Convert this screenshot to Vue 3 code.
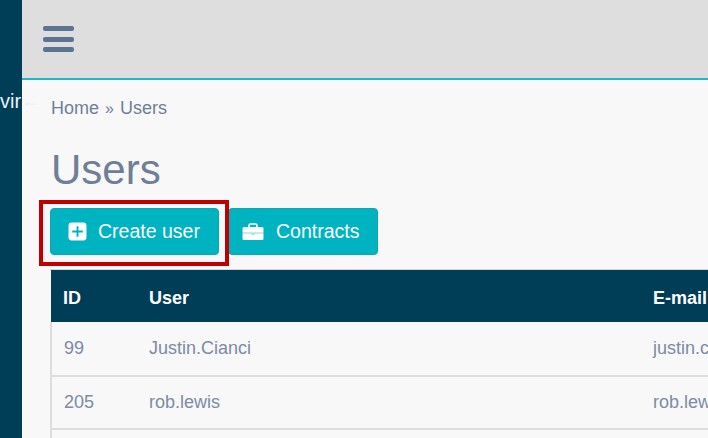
<template>
  <div class="page">
    <aside class="sidebar">
      <span class="side-text">vir</span>
    </aside>
    <span class="side-arrow">←</span>

    <div class="main">
      <header class="topbar">
        <button class="burger" aria-label="Menu">
          <span></span><span></span><span></span>
        </button>
      </header>

      <div class="content">
        <div class="breadcrumb">Home <span class="sep">»</span> Users</div>
        <h1>Users</h1>

        <div class="actions">
          <button class="btn btn-create">
            <svg width="19" height="19" viewBox="0 0 18 18">
              <rect x="0.5" y="0.5" width="17" height="17" rx="3" fill="#fff" />
              <path d="M9 4v10M4 9h10" stroke="#00b3c1" stroke-width="1.800" fill="none" />
            </svg>
            Create user
          </button>
          <button class="btn btn-contracts">
            <svg width="22" height="18" viewBox="0 0 22 18">
              <path d="M7 4V2.5A1.5 1.5 0 0 1 8.500 1h5A1.500 1.500 0 0 1 15 2.500V4" stroke="#fff" stroke-width="1.600" fill="none" />
              <path d="M0.500 5.500A1.500 1.500 0 0 1 2 4h18a1.500 1.500 0 0 1 1.500 1.500V9h-21z" fill="#fff" />
              <path d="M0.500 11h21v4.500A1.500 1.500 0 0 1 20 17H2a1.500 1.500 0 0 1-1.500-1.500z" fill="#fff" />
              <rect x="0.500" y="9" width="21" height="2" fill="#bfecef" />
              <path d="M9 10.500c.6 1.200 3.400 1.200 4 0" stroke="#7fd6dd" stroke-width="1" fill="none" />
            </svg>
            Contracts
          </button>
          <div class="highlight"></div>
        </div>

        <table class="users">
          <thead>
            <tr>
              <th class="col-id">ID</th>
              <th class="col-user">User</th>
              <th>E-mail</th>
            </tr>
          </thead>
          <tbody>
            <tr v-for="row in rows" :key="row.id">
              <td>{{ row.id }}</td>
              <td>{{ row.user }}</td>
              <td>{{ row.email }}</td>
            </tr>
          </tbody>
        </table>
      </div>
    </div>
  </div>
</template>

<script setup>
const rows = [
  { id: 99, user: 'Justin.Cianci', email: 'justin.cianci@example.com' },
  { id: 205, user: 'rob.lewis', email: 'rob.lewis@example.com' },
  { id: '', user: '', email: '' },
]
</script>

<style>
html, body {
  margin: 0;
  overflow: hidden;
}
</style>

<style scoped>
.page {
  position: relative;
  display: flex;
  width: 708px;
  height: 438px;
  overflow: hidden;
  background: #f8f8f8;
  font-family: "Liberation Sans", Arial, sans-serif;
}

.sidebar {
  flex: 0 0 22px;
  position: relative;
  background: #003d57;
}

.side-text {
  position: absolute;
  left: 0;
  top: 90px;
  color: #e6f3f7;
  font-size: 20px;
  line-height: 22px;
  z-index: 1;
}

.side-arrow {
  position: absolute;
  left: 21px;
  top: 90px;
  color: #e9eff1;
  font-size: 18px;
  line-height: 22px;
}

.main {
  flex: 1;
  min-width: 0;
}

.topbar {
  height: 78px;
  background: #dedede;
  border-bottom: 2px solid #20b8c4;
  display: flex;
  align-items: center;
  padding-left: 21px;
}

.burger {
  display: flex;
  flex-direction: column;
  gap: 5.500px;
  width: 31px;
  padding: 0;
  border: 0;
  background: none;
}

.burger span {
  height: 5px;
  border-radius: 2px;
  background: #5c7391;
}

.content {
  padding: 17px 0 0 28px;
}

.breadcrumb {
  padding-left: 1px;
  color: #6f7f97;
  font-size: 18px;
  line-height: 22px;
}

.sep {
  margin: 0 1px;
  font-size: 16px;
}

h1 {
  margin: 26px 0 0;
  padding-left: 1px;
  color: #6f7f97;
  font-size: 42px;
  font-weight: 400;
  line-height: 48px;
}

.actions {
  position: relative;
  display: flex;
  gap: 9px;
  margin-top: 14px;
}

.btn {
  display: flex;
  align-items: center;
  height: 47px;
  padding: 0 0 0 17px;
  border: 1px solid #0ca7b4;
  border-radius: 4px;
  background: #00b3c1;
  color: #fff;
  font-family: inherit;
  font-size: 19.500px;
}

.btn-create {
  width: 169px;
  gap: 11px;
}

.btn-contracts {
  width: 150px;
  padding-left: 13px;
  gap: 12px;
}

.highlight {
  position: absolute;
  left: -11px;
  top: -8px;
  width: 190px;
  height: 66px;
  box-sizing: border-box;
  border: 4px solid #c00000;
  pointer-events: none;
}

.users {
  width: 800px;
  margin: 15px 0 0;
  border-collapse: collapse;
  table-layout: fixed;
  font-size: 18px;
  box-shadow: 0 -1px 0 #d5d8da;
}

.col-id {
  width: 86px;
}

.col-user {
  width: 504px;
}

th, td {
  box-sizing: border-box;
}

th {
  height: 52px;
  padding: 4px 0 0 12px;
  background: #003d57;
  color: #fff;
  font-weight: 700;
  text-align: left;
}

td {
  height: 53px;
  padding: 0 0 0 12px;
  border-bottom: 2px solid #dddddd;
  color: #7d8ba3;
  white-space: nowrap;
  overflow: hidden;
}

tbody tr:first-child td {
  height: 54px;
}

tbody tr td:first-child {
  border-left: 2px solid #dddddd;
}
</style>
